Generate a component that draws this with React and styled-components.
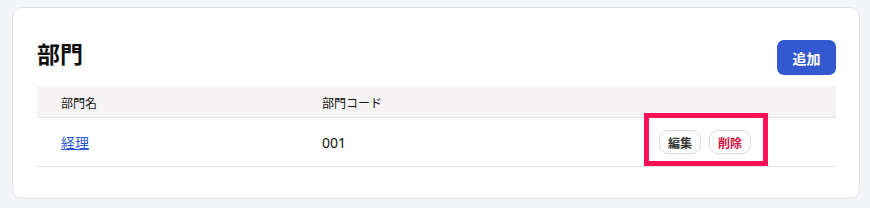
import React from 'react';
import styled, { createGlobalStyle } from 'styled-components';

const GlobalStyle = createGlobalStyle`
    html, body {
        margin: 0;
        padding: 0;
        background: #f4f5f9;
        font-family: "Noto Sans", "Noto Sans CJK JP", sans-serif;
        color: #111;
    }
`;

const Page = styled.div`
    padding: 7px 10px 8px 12px;
`;

const Card = styled.div`
    background: #fff;
    border: 1px solid #e1e3e8;
    border-radius: 10px;
    padding: 32px 23px 31px 24px;
`;

const Header = styled.div`
    display: flex;
    align-items: center;
    justify-content: space-between;
    margin-bottom: 12px;
`;

const Title = styled.h2`
    margin: 0 0 9px;
    font-size: 23px;
    font-weight: 700;
    line-height: 1;
    font-family: "Noto Sans CJK JP", sans-serif;
`;

const PrimaryButton = styled.button`
    width: 59px;
    height: 35px;
    border: none;
    border-radius: 7px;
    background: #3358cf;
    color: #fff;
    font-family: "Noto Sans CJK JP", sans-serif;
    font-size: 14px;
    font-weight: 700;
    cursor: pointer;
`;

const Row = styled.div`
    display: grid;
    grid-template-columns: 261px 337px 1fr;
    align-items: center;
    height: ${(p) => p.$height}px;
    background: ${(p) => p.$head ? '#f5f3f4' : '#fff'};
    border-bottom: 1px solid #e4e4e6;
`;

const Cell = styled.div`
    padding-left: 24px;
    font-size: ${(p) => p.$head ? 12 : 14}px;
    font-family: "Noto Sans CJK JP", sans-serif;
    color: #111;
`;

const Code = styled(Cell)`
    font-family: "Noto Sans", "Noto Sans CJK JP", sans-serif;
`;

const NameLink = styled.a`
    color: #2d59cf;
    text-decoration: underline;
    cursor: pointer;
`;

const Actions = styled.div`
    position: relative;
    display: inline-flex;
    gap: 8px;
`;

const SmallButton = styled.button`
    width: 42px;
    height: 24px;
    padding: 0;
    background: #fff;
    border: 1px solid #dcdcdc;
    border-radius: 9px;
    font-family: "Noto Sans CJK JP", sans-serif;
    font-size: 12px;
    font-weight: 700;
    color: ${(p) => p.$danger ? '#d4123c' : '#333'};
    cursor: pointer;
`;

const Highlight = styled.div`
    position: absolute;
    left: -15px;
    top: -17px;
    width: 124px;
    height: 53px;
    box-sizing: border-box;
    border: 5px solid #fe1058;
    pointer-events: none;
`;

const departments = [
    { name: '経理', code: '001' }
];

const App = () => (
    <Page>
        <GlobalStyle />
        <Card>
            <Header>
                <Title>部門</Title>
                <PrimaryButton>追加</PrimaryButton>
            </Header>
            <Row $head $height={30}>
                <Cell $head>部門名</Cell>
                <Cell $head>部門コード</Cell>
                <Cell $head />
            </Row>
            {departments.map((d) => (
                <Row key={d.code} $height={48}>
                    <Cell><NameLink>{d.name}</NameLink></Cell>
                    <Code>{d.code}</Code>
                    <Cell>
                        <Actions>
                            <SmallButton>編集</SmallButton>
                            <SmallButton $danger>削除</SmallButton>
                            <Highlight />
                        </Actions>
                    </Cell>
                </Row>
            ))}
        </Card>
    </Page>
);

export default App;
